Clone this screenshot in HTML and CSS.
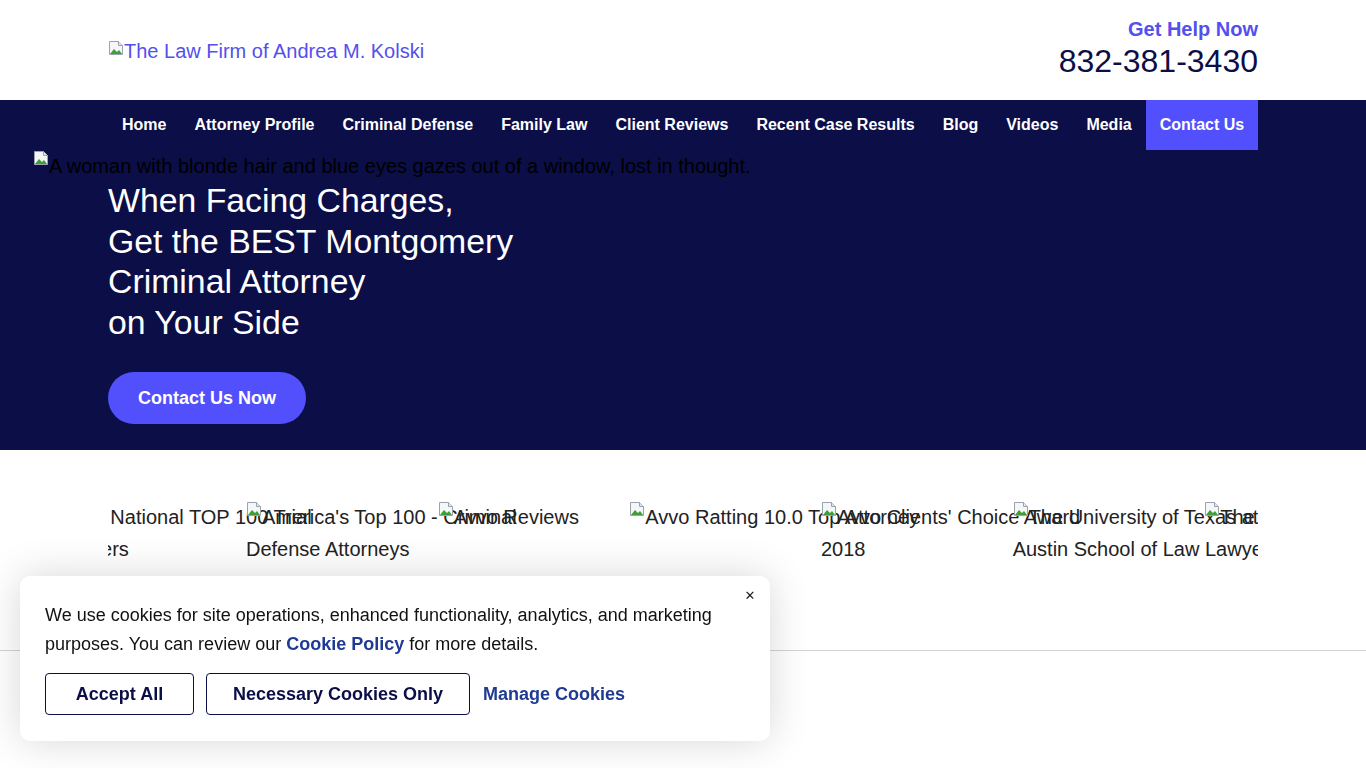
FILE: index.html
```html
<!DOCTYPE html>
<html lang="en">
<head>
<meta charset="utf-8">
<title>The Law Firm of Andrea M. Kolski</title>
<link rel="stylesheet" href="styles.css">
</head>
<body>
<header class="site-header">
  <div class="container header-inner">
    <a class="logo" href="#"><svg class="broken" viewBox="0 0 16 16" width="16" height="16"><path d="M1.5 1.5h9l4 4v9h-13z" fill="#f4f6f8" stroke="#9aa3ad"/><path d="M10.5 1.5v4h4" fill="#e2e6ea" stroke="#9aa3ad"/><path d="M2 14l4-5 3 3 2-2 3 4z" fill="#3f9e3a"/></svg>The Law Firm of Andrea M. Kolski</a>
    <div class="contact-block">
      <div class="help">Get Help Now</div>
      <div class="phone">832-381-3430</div>
    </div>
  </div>
</header>

<section class="hero">
  <div class="hero-img"><svg class="broken" viewBox="0 0 16 16" width="16" height="16"><path d="M1.5 1.5h9l4 4v9h-13z" fill="#f4f6f8" stroke="#9aa3ad"/><path d="M10.5 1.5v4h4" fill="#e2e6ea" stroke="#9aa3ad"/><path d="M2 14l4-5 3 3 2-2 3 4z" fill="#3f9e3a"/></svg><span class="hero-alt">A woman with blonde hair and blue eyes gazes out of a window, lost in thought.</span></div>
  <nav class="main-nav">
    <ul class="container nav-list">
      <li><a href="#">Home</a></li>
      <li><a href="#">Attorney Profile</a></li>
      <li><a href="#">Criminal Defense</a></li>
      <li><a href="#">Family Law</a></li>
      <li><a href="#">Client Reviews</a></li>
      <li><a href="#">Recent Case Results</a></li>
      <li><a href="#">Blog</a></li>
      <li><a href="#">Videos</a></li>
      <li><a href="#">Media</a></li>
      <li><a class="active" href="#">Contact Us</a></li>
    </ul>
  </nav>
  <div class="container hero-content">
    <h1 class="hero-title">When Facing Charges,<br>Get the BEST Montgomery<br>Criminal Attorney<br>on Your Side</h1>
    <a class="btn-primary" href="#">Contact Us Now</a>
  </div>
</section>

<section class="awards">
  <div class="container awards-viewport">
    <div class="awards-track">
      <div class="award"><span class="alt"><svg class="broken" viewBox="0 0 16 16" width="16" height="16"><path d="M1.5 1.5h9l4 4v9h-13z" fill="#f4f6f8" stroke="#9aa3ad"/><path d="M10.5 1.5v4h4" fill="#e2e6ea" stroke="#9aa3ad"/><path d="M2 14l4-5 3 3 2-2 3 4z" fill="#3f9e3a"/></svg>The National TOP 100 Trial<br>Lawyers</span></div>
      <div class="award"><span class="alt"><svg class="broken" viewBox="0 0 16 16" width="16" height="16"><path d="M1.5 1.5h9l4 4v9h-13z" fill="#f4f6f8" stroke="#9aa3ad"/><path d="M10.5 1.5v4h4" fill="#e2e6ea" stroke="#9aa3ad"/><path d="M2 14l4-5 3 3 2-2 3 4z" fill="#3f9e3a"/></svg>America's Top 100 - Criminal<br>Defense Attorneys</span></div>
      <div class="award"><span class="alt"><svg class="broken" viewBox="0 0 16 16" width="16" height="16"><path d="M1.5 1.5h9l4 4v9h-13z" fill="#f4f6f8" stroke="#9aa3ad"/><path d="M10.5 1.5v4h4" fill="#e2e6ea" stroke="#9aa3ad"/><path d="M2 14l4-5 3 3 2-2 3 4z" fill="#3f9e3a"/></svg>Avvo Reviews</span></div>
      <div class="award"><span class="alt"><svg class="broken" viewBox="0 0 16 16" width="16" height="16"><path d="M1.5 1.5h9l4 4v9h-13z" fill="#f4f6f8" stroke="#9aa3ad"/><path d="M10.5 1.5v4h4" fill="#e2e6ea" stroke="#9aa3ad"/><path d="M2 14l4-5 3 3 2-2 3 4z" fill="#3f9e3a"/></svg>Avvo Ratting 10.0 Top Attorney</span></div>
      <div class="award"><span class="alt"><svg class="broken" viewBox="0 0 16 16" width="16" height="16"><path d="M1.5 1.5h9l4 4v9h-13z" fill="#f4f6f8" stroke="#9aa3ad"/><path d="M10.5 1.5v4h4" fill="#e2e6ea" stroke="#9aa3ad"/><path d="M2 14l4-5 3 3 2-2 3 4z" fill="#3f9e3a"/></svg>Avvo Clients' Choice Award<br>2018</span></div>
      <div class="award"><span class="alt"><svg class="broken" viewBox="0 0 16 16" width="16" height="16"><path d="M1.5 1.5h9l4 4v9h-13z" fill="#f4f6f8" stroke="#9aa3ad"/><path d="M10.5 1.5v4h4" fill="#e2e6ea" stroke="#9aa3ad"/><path d="M2 14l4-5 3 3 2-2 3 4z" fill="#3f9e3a"/></svg>The University of Texas at<br>Austin School of Law Lawyers</span></div>
      <div class="award"><span class="alt"><svg class="broken" viewBox="0 0 16 16" width="16" height="16"><path d="M1.5 1.5h9l4 4v9h-13z" fill="#f4f6f8" stroke="#9aa3ad"/><path d="M10.5 1.5v4h4" fill="#e2e6ea" stroke="#9aa3ad"/><path d="M2 14l4-5 3 3 2-2 3 4z" fill="#3f9e3a"/></svg>The National TOP 100 Trial</span></div>
    </div>
  </div>
</section>

<div class="below"></div>

<div class="cookie-banner">
  <button class="cookie-close" type="button" aria-label="Close">&#x2715;</button>
  <p class="cookie-text">We use cookies for site operations, enhanced functionality, analytics, and marketing purposes. You can review our <a href="#">Cookie Policy</a> for more details.</p>
  <div class="cookie-actions">
    <button class="cookie-btn btn-accept" type="button">Accept All</button>
    <button class="cookie-btn btn-necessary" type="button">Necessary Cookies Only</button>
    <a class="manage" href="#">Manage Cookies</a>
  </div>
</div>
</body>
</html>
```

FILE: styles.css
```css
* { box-sizing: border-box; }
html, body { margin: 0; padding: 0; }
body {
  font-family: "Liberation Sans", Arial, sans-serif;
  color: #222;
  background: #fff;
  overflow: hidden;
}
a { text-decoration: none; }
.container { width: 1150px; margin: 0 auto; }
.broken { display: inline-block; width: 16px; height: 16px; vertical-align: top; flex: 0 0 16px; }

/* header */
.site-header { height: 100px; background: #fff; }
.header-inner {
  height: 100%;
  display: flex;
  justify-content: space-between;
  align-items: center;
}
.logo {
  font-size: 20px;
  line-height: 22px;
  color: #5350ee;
  display: flex;
  align-items: flex-start;
  margin-top: 2px;
}
.contact-block { text-align: right; margin-top: -2px; }
.help { font-size: 20px; font-weight: 700; color: #5350ee; line-height: 24px; }
.phone { font-size: 32px; color: #0b0e47; line-height: 40px; }

/* hero */
.hero {
  position: relative;
  background: #0b0e47;
  height: 350px;
}
.hero-img {
  position: absolute;
  left: 33px;
  top: 50px;
  display: flex;
  align-items: flex-start;
  font-size: 20px;
  line-height: 22px;
  color: #000;
  white-space: nowrap;
}
.hero-alt { padding-top: 5px; }
.main-nav { position: relative; height: 50px; }
.nav-list {
  list-style: none;
  padding: 0;
  margin: 0 auto;
  height: 50px;
  display: flex;
  justify-content: space-between;
}
.nav-list li { flex: 0 0 auto; }
.nav-list a {
  display: flex;
  align-items: center;
  height: 50px;
  padding: 0 14px;
  color: #fff;
  font-size: 16px;
  font-weight: 700;
  white-space: nowrap;
}
.nav-list a.active { background: #524ffd; }
.hero-content { position: relative; padding-top: 30px; }
.hero-title {
  margin: 0;
  font-size: 33.8px;
  line-height: 40.6px;
  font-weight: 400;
  color: #fff;
}
.btn-primary {
  display: inline-flex;
  align-items: center;
  justify-content: center;
  margin-top: 30px;
  width: 198px;
  height: 52px;
  border-radius: 26px;
  background: #524ffd;
  color: #fff;
  font-size: 18px;
  font-weight: 700;
}

/* awards carousel */
.awards {
  height: 201px;
  border-bottom: 1px solid #d4d4d4;
  padding-top: 51px;
}
.awards-viewport { overflow: hidden; height: 80px; }
.awards-track {
  display: flex;
  margin-left: -53.67px;
}
.award {
  flex: 0 0 191.667px;
  width: 191.667px;
  min-width: 0;
  white-space: nowrap;
}
.alt {
  display: block;
  font-size: 20px;
  line-height: 32px;
  color: #222;
}

.below { height: 120px; }

/* cookie banner */
.cookie-banner {
  position: fixed;
  left: 20px;
  top: 576px;
  width: 750px;
  height: 165px;
  background: #fff;
  border-radius: 10px;
  box-shadow: 0 0 40px rgba(0, 0, 0, 0.16);
  padding: 25px 25px 26px;
}
.cookie-close {
  position: absolute;
  right: 12px;
  top: 10px;
  border: 0;
  background: none;
  font-family: "DejaVu Sans", sans-serif;
  font-size: 13px;
  font-weight: 700;
  color: #222;
  padding: 0;
  width: 16px;
  height: 18px;
}
.cookie-text {
  margin: 0;
  font-size: 18px;
  line-height: 29px;
  color: #111;
}
.cookie-text a { color: #1f3a93; font-weight: 700; }
.cookie-actions {
  display: flex;
  align-items: center;
  gap: 12px;
  margin-top: 14px;
}
.cookie-btn {
  height: 42px;
  border: 1px solid #0b0e47;
  border-radius: 4px;
  background: #fff;
  color: #0b0e47;
  font-family: "Liberation Sans", Arial, sans-serif;
  font-size: 18px;
  font-weight: 700;
  padding: 0;
}
.btn-accept { width: 149px; }
.btn-necessary { width: 264px; }
.manage {
  margin-left: 1px;
  color: #1f3a93;
  font-size: 18px;
  font-weight: 700;
}
```
